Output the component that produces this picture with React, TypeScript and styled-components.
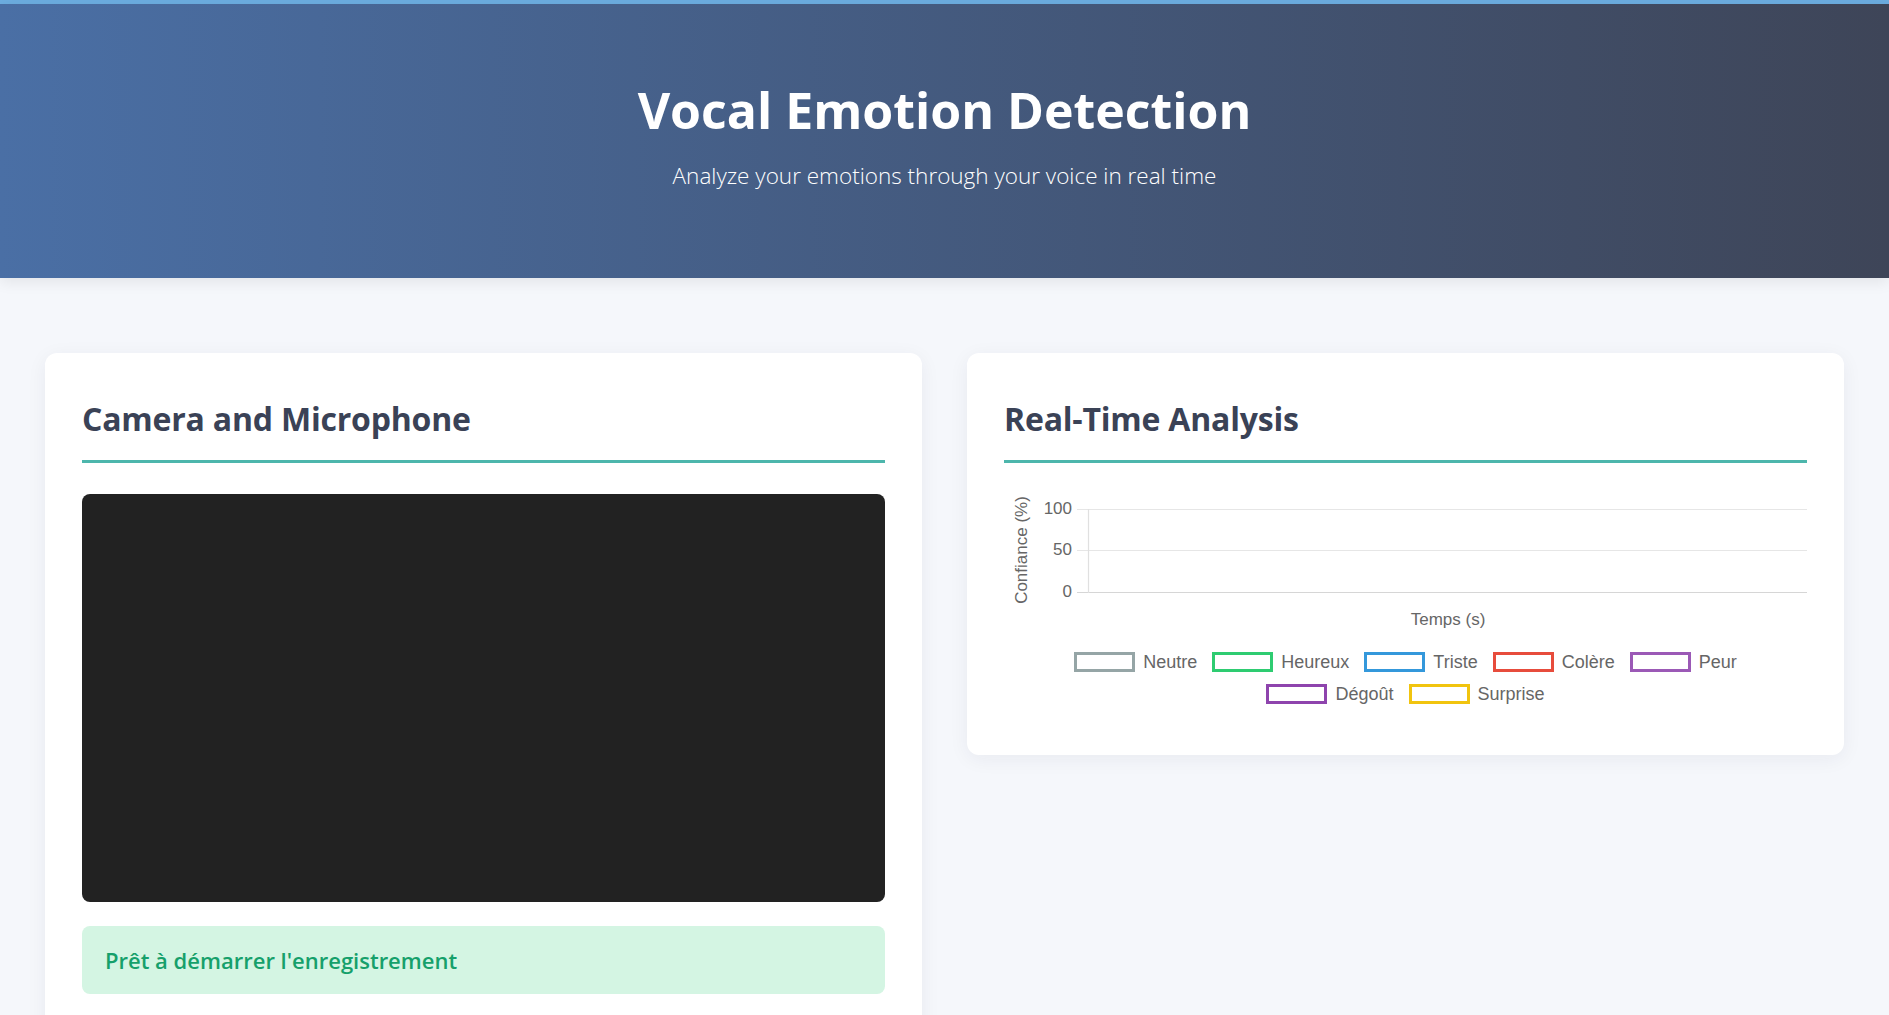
import React from 'react';
import styled, { createGlobalStyle } from 'styled-components';

const GlobalStyle = createGlobalStyle`
  html, body { margin: 0; padding: 0; }
  body {
    background: #f5f7fb;
    font-family: "Open Sans", "Noto Sans", sans-serif;
    overflow: hidden;
  }
  * { box-sizing: border-box; }
`;

const TopStripe = styled.div`
  height: 4px;
  background: #6cade0;
`;

const Header = styled.header`
  height: 274px;
  padding-top: 81px;
  background: linear-gradient(90deg, #4a6fa5 0%, #3e4558 100%);
  color: #fff;
  display: flex;
  flex-direction: column;
  align-items: center;
  box-shadow: 0 4px 14px rgba(0, 0, 0, 0.08);
  position: relative;
  z-index: 1;
`;

const Title = styled.h1`
  margin: 0;
  font-size: 50px;
  line-height: 1;
  font-weight: 700;
`;

const Subtitle = styled.p`
  margin: 30px 0 0;
  font-size: 22.5px;
  line-height: 1;
  font-weight: 300;
`;

const Main = styled.main`
  padding: 75px 45px;
  display: grid;
  grid-template-columns: 1fr 1fr;
  gap: 45px;
  align-items: start;
`;

const Card = styled.section`
  background: #fff;
  border-radius: 12px;
  padding: 37px;
  box-shadow: 0 4px 20px rgba(30, 40, 70, 0.06);
`;

const CardTitle = styled.h2`
  margin: 0 0 31px;
  padding: 3px 0 16px;
  font-size: 32px;
  letter-spacing: -0.2px;
  line-height: 1.6;
  font-weight: 700;
  color: #3a4256;
  border-bottom: 3px solid #4db6ac;
`;

const Video = styled.div`
  height: 408px;
  background: #222;
  border-radius: 8px;
`;

const Status = styled.div`
  margin-top: 24px;
  height: 68px;
  padding: 0 23px;
  display: flex;
  align-items: center;
  background: #d4f5e3;
  color: #16a06b;
  border-radius: 8px;
  font-size: 22px;
  font-weight: 600;
`;

const Spacer = styled.div`
  height: 200px;
`;

const ChartWrap = styled.div`
  padding-bottom: 14px;
  font-family: "Liberation Sans", Arial, sans-serif;
`;

const ChartSvg = styled.svg`
  display: block;
  width: 100%;
  height: 145px;
  overflow: visible;
`;

const Legend = styled.div`
  margin-top: 13px;
  display: flex;
  flex-direction: column;
  align-items: center;
  gap: 12px;
`;

const LegendRow = styled.div`
  display: flex;
  gap: 15px;
`;

const LegendItem = styled.div`
  display: flex;
  align-items: center;
  gap: 8px;
  height: 20px;
  font-size: 18px;
  color: #666;
`;

const LegendBox = styled.span<{ $color: string }>`
  width: 61px;
  height: 20px;
  border: 3px solid ${(p) => p.$color};
  background: rgba(255, 255, 255, 0.9);
`;

const emotions = [
  [
    ['Neutre', '#95a5a6'],
    ['Heureux', '#2ecc71'],
    ['Triste', '#3498db'],
    ['Colère', '#e74c3c'],
    ['Peur', '#9b59b6'],
  ],
  [
    ['Dégoût', '#8e44ad'],
    ['Surprise', '#f1c40f'],
  ],
];

function Chart() {
  const grid = [
    { y: 15.5, label: '100' },
    { y: 56.5, label: '50' },
    { y: 98.5, label: '0' },
  ];
  return (
    <ChartWrap>
      <ChartSvg>
        {grid.map((g) => (
          <g key={g.label}>
            <line x1="73" x2="100%" y1={g.y} y2={g.y} stroke={g.label === '0' ? '#d6d6d6' : '#e6e6e6'} strokeWidth="1.2" />
            <text x="68" y={g.y + 4} textAnchor="end" fontSize="17" fill="#666" fontFamily="Liberation Sans, Arial, sans-serif">
              {g.label}
            </text>
          </g>
        ))}
        <line x1="84.5" x2="84.5" y1="15" y2="99" stroke="#e0e0e0" strokeWidth="1.2" />
        <text
          transform="translate(23 56) rotate(-90)"
          textAnchor="middle"
          fontSize="17"
          fill="#666"
          fontFamily="Liberation Sans, Arial, sans-serif"
        >
          Confiance (%)
        </text>
        <text x="444" y="131" textAnchor="middle" fontSize="17" fill="#666" fontFamily="Liberation Sans, Arial, sans-serif">
          Temps (s)
        </text>
      </ChartSvg>
      <Legend>
        {emotions.map((row, i) => (
          <LegendRow key={i}>
            {row.map(([name, color]) => (
              <LegendItem key={name}>
                <LegendBox $color={color} />
                {name}
              </LegendItem>
            ))}
          </LegendRow>
        ))}
      </Legend>
    </ChartWrap>
  );
}

export default function App() {
  return (
    <>
      <GlobalStyle />
      <TopStripe />
      <Header>
        <Title>Vocal Emotion Detection</Title>
        <Subtitle>Analyze your emotions through your voice in real time</Subtitle>
      </Header>
      <Main>
        <Card>
          <CardTitle>Camera and Microphone</CardTitle>
          <Video />
          <Status>Prêt à démarrer l'enregistrement</Status>
          <Spacer />
        </Card>
        <Card>
          <CardTitle>Real-Time Analysis</CardTitle>
          <Chart />
        </Card>
      </Main>
    </>
  );
}
